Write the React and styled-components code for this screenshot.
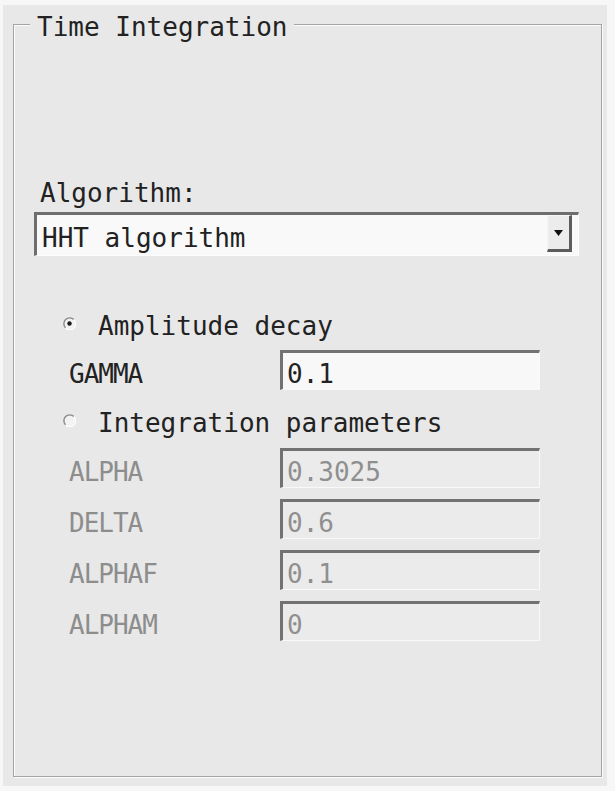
import React from 'react';
import styled, { createGlobalStyle } from 'styled-components';

const GlobalStyle = createGlobalStyle`
  html, body {
    margin: 0;
    padding: 0;
    background: #f7f7f7;
  }
  body {
    font-family: "DejaVu Sans Mono", "Liberation Mono", monospace;
    font-size: 26px;
    color: #222;
  }
`;

const Panel = styled.div`
  margin: 5px 8px 0 3px;
  height: 781px;
  background: #e8e8e8;
  padding-top: 7px;
  box-sizing: border-box;
`;

const Group = styled.fieldset`
  margin: 0 0 0 10px;
  width: 589px;
  height: 765px;
  box-sizing: border-box;
  padding: 0;
  border: 1px solid #a3a3a3;
  box-shadow: 1px 1px 0 #fcfcfc, inset 1px 1px 0 #fcfcfc;
`;

const Title = styled.legend`
  margin-left: 16px;
  padding: 5px 7px 0;
  line-height: 20px;
  background: #e8e8e8;
  color: #222;
`;

const Content = styled.div`
  padding: 141px 22px 0 20px;
  display: flex;
  flex-direction: column;
`;

const Caption = styled.div`
  line-height: 30px;
  margin-left: 6px;
`;

const Combo = styled.div`
  margin-top: 4px;
  height: 44px;
  box-sizing: border-box;
  display: flex;
  align-items: stretch;
  background: #f9f9f9;
  border-top: 3px solid #6e6e6e;
  border-left: 3px solid #6e6e6e;
  border-right: 1px solid #fdfdfd;
  border-bottom: 1px solid #fdfdfd;
`;

const ComboText = styled.div`
  flex: 1;
  padding: 8px 0 0 5px;
  line-height: 30px;
`;

const ComboButton = styled.div`
  width: 25px;
  margin: 0 6px 3px 0;
  box-sizing: border-box;
  display: flex;
  align-items: center;
  justify-content: center;
  background: #ececec;
  border-top: 1px solid #f6f6f6;
  border-left: 1px solid #f6f6f6;
  border-right: 3px solid #5c5c5c;
  border-bottom: 3px solid #5c5c5c;
`;

const Options = styled.div`
  margin-top: 55px;
  margin-left: 29px;
  display: flex;
  flex-direction: column;
`;

const RadioRow = styled.div`
  display: flex;
  align-items: center;
  gap: 22px;
  line-height: 30px;
  margin-top: ${p => p.$gap || 0}px;
`;

const RadioMark = styled.svg`
  width: 13px;
  height: 13px;
  flex: none;
  margin-top: -5px;
`;

const FieldRow = styled.div`
  display: grid;
  grid-template-columns: 211px 260px;
  height: 40px;
  margin-top: ${p => p.$gap}px;
  margin-left: 6px;
`;

const FieldLabel = styled.div`
  padding-top: 9px;
  line-height: 30px;
  letter-spacing: -1px;
  color: ${p => (p.$disabled ? '#8d8d8d' : '#222')};
`;

const Field = styled.div`
  box-sizing: border-box;
  height: 40px;
  padding: 6px 0 0 4px;
  line-height: 30px;
  background: ${p => (p.$disabled ? '#ebebeb' : '#f8f8f8')};
  color: ${p => (p.$disabled ? '#8f8f8f' : '#222')};
  border-top: 3px solid #727272;
  border-left: 3px solid #727272;
  border-right: 1px solid #f9f9f9;
  border-bottom: 1px solid #f9f9f9;
`;

const Radio = ({ checked }) => (
  <RadioMark viewBox="0 0 13 13">
    <circle cx="6.5" cy="6.5" r="5.5" fill="#f3f3f3" />
    <path d="M10.9 2.6 A5.5 5.5 0 0 0 2.6 10.9" fill="none" stroke="#8a8a8a" strokeWidth="1.4" />
    <path d="M2.6 10.9 A5.5 5.5 0 0 0 10.9 2.6" fill="none" stroke="#fdfdfd" strokeWidth="1.4" />
    {checked && <circle cx="6.5" cy="6.5" r="2.2" fill="#1a1a1a" />}
  </RadioMark>
);

const params = [
  { name: 'ALPHA', value: '0.3025' },
  { name: 'DELTA', value: '0.6' },
  { name: 'ALPHAF', value: '0.1' },
  { name: 'ALPHAM', value: '0' },
];

const App = () => (
  <>
    <GlobalStyle />
    <Panel>
      <Group>
        <Title>Time Integration</Title>
        <Content>
          <Caption>Algorithm:</Caption>
          <Combo>
            <ComboText>HHT algorithm</ComboText>
            <ComboButton>
              <svg width="9" height="6" viewBox="0 0 9 6">
                <path d="M0 0 H9 L4.5 6 Z" fill="#111" />
              </svg>
            </ComboButton>
          </Combo>
          <Options>
            <RadioRow>
              <Radio checked />
              <span>Amplitude decay</span>
            </RadioRow>
            <FieldRow $gap={9}>
              <FieldLabel>GAMMA</FieldLabel>
              <Field>0.1</Field>
            </FieldRow>
            <RadioRow $gap={18}>
              <Radio />
              <span>Integration parameters</span>
            </RadioRow>
            {params.map((p, i) => (
              <FieldRow key={p.name} $gap={i === 0 ? 10 : 11}>
                <FieldLabel $disabled>{p.name}</FieldLabel>
                <Field $disabled>{p.value}</Field>
              </FieldRow>
            ))}
          </Options>
        </Content>
      </Group>
    </Panel>
  </>
);

export default App;
